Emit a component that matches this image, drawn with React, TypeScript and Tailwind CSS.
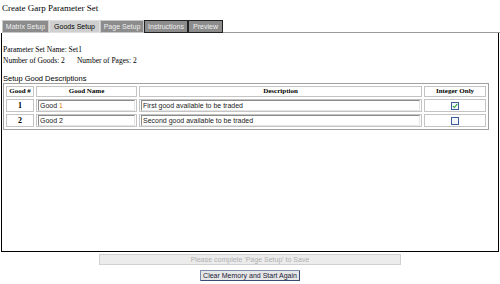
import React from 'react';

const tabs = [
  { label: 'Matrix Setup', w: 'w-[47px]', kind: 'idle' },
  { label: 'Goods Setup', w: 'w-[51px]', kind: 'active' },
  { label: 'Page Setup', w: 'w-[44px]', kind: 'idle' },
  { label: 'Instructions', w: 'w-[44px]', kind: 'dark' },
  { label: 'Preview', w: 'w-[35px]', kind: 'dark' },
];

const goods = [
  { id: 1, name: 'Good ', suffix: '1', desc: 'First good available to be traded', integer: true },
  { id: 2, name: 'Good 2', suffix: '', desc: 'Second good available to be traded', integer: false },
];

function FakeInput({ children }: { children: React.ReactNode }) {
  return (
    <div className="h-[11px] border border-t-[#8a8a8a] border-l-[#8a8a8a] border-b-[#e4e4e4] border-r-[#e4e4e4] bg-white px-[1px] text-[7px] leading-[9px] text-[#222] font-['Liberation_Sans',Arial,sans-serif] whitespace-nowrap overflow-hidden">
      {children}
    </div>
  );
}

function Check({ on }: { on: boolean }) {
  return (
    <div className="mx-auto w-[8px] h-[8px] border border-[#3b5f9e] bg-[#f4f7fb] flex items-center justify-center">
      {on && (
        <svg viewBox="0 0 8 8" className="w-[6px] h-[6px]">
          <path d="M1 4 L3 6 L7 1.5" fill="none" stroke="#2a9a2a" strokeWidth="1.4" />
        </svg>
      )}
    </div>
  );
}

export default function App() {
  return (
    <div className="w-[500px] h-[284px] bg-white overflow-hidden font-['Liberation_Serif','Times_New_Roman',serif] text-black">
      {/* Title */}
      <div className="pt-[3px] pl-[2px] text-[9px] leading-[10px]">Create Garp Parameter Set</div>

      {/* Tabs */}
      <div className="mt-[6px] flex items-end h-[14px] pl-[2px]">
        {tabs.map((t) => (
          <div
            key={t.label}
            className={`${t.w} h-[13px] flex items-center justify-center text-[7px] leading-[8px] font-['Liberation_Sans',Arial,sans-serif] border ${
              t.kind === 'active'
                ? 'bg-[#cfcfcf] text-black border-[#e0e0e0]'
                : t.kind === 'dark'
                ? 'bg-[#8c8c8c] text-[#f0f0f0] border-[#222]'
                : 'bg-[#8c8c8c] text-[#f0f0f0] border-[#c8c8c8]'
            }`}
          >
            {t.label}
          </div>
        ))}
        <div className="flex-1 border-b border-[#9a9a9a]" />
      </div>

      {/* Panel */}
      <div className="h-[219px] border-l border-r border-b border-black ml-[1px] mr-[1px] pl-[1px]">
        <div className="pt-[11px] text-[7.5px] leading-[11px]">
          <div>Parameter Set Name: Set1</div>
          <div>
            Number of Goods: 2<span className="inline-block w-[12px]" />Number of Pages: 2
          </div>
        </div>
        <div className="mt-[8px] text-[7.5px] leading-[9px] font-['Liberation_Sans',Arial,sans-serif]">
          Setup Good Descriptions
        </div>

        <table className="w-[486px] border-separate border-spacing-[2px] border border-[#a0a0a0] text-[7px]">
          <thead>
            <tr>
              <th className="w-[28px] h-[11px] p-0 border border-[#c4c4c4] font-bold leading-[9px]">Good #</th>
              <th className="w-[101px] h-[11px] p-0 border border-[#c4c4c4] font-bold leading-[9px]">Good Name</th>
              <th className="h-[11px] p-0 border border-[#c4c4c4] font-bold leading-[9px]">Description</th>
              <th className="w-[62px] h-[11px] p-0 border border-[#c4c4c4] font-bold leading-[9px]">Integer Only</th>
            </tr>
          </thead>
          <tbody>
            {goods.map((g) => (
              <tr key={g.id}>
                <td className="h-[13px] p-0 border border-[#c4c4c4] text-center font-bold text-[8px] leading-[10px]">{g.id}</td>
                <td className="h-[13px] py-0 px-[1px] border border-[#c4c4c4]">
                  <FakeInput>
                    {g.name}
                    {g.suffix && <span className="text-[#e07a10]">{g.suffix}</span>}
                  </FakeInput>
                </td>
                <td className="h-[13px] py-0 px-[1px] border border-[#c4c4c4]">
                  <FakeInput>{g.desc}</FakeInput>
                </td>
                <td className="h-[13px] p-0 border border-[#c4c4c4]">
                  <Check on={g.integer} />
                </td>
              </tr>
            ))}
          </tbody>
        </table>
      </div>

      {/* Buttons */}
      <div className="flex flex-col items-center font-['Liberation_Sans',Arial,sans-serif]">
        <div className="mt-[2px] w-[302px] h-[11px] bg-[#ececec] border border-[#d0d0d0] text-[7px] leading-[9px] text-[#b0b0b0] text-center">
          Please complete 'Page Setup' to Save
        </div>
        <div className="mt-[5px] w-[100px] h-[11px] bg-[#e6e6e6] border border-[#7a8cae] border-b-[#3a4a70] border-r-[#3a4a70] text-[7px] leading-[9px] text-[#1a1a3a] text-center rounded-[1px]">
          Clear Memory and Start Again
        </div>
      </div>
    </div>
  );
}
